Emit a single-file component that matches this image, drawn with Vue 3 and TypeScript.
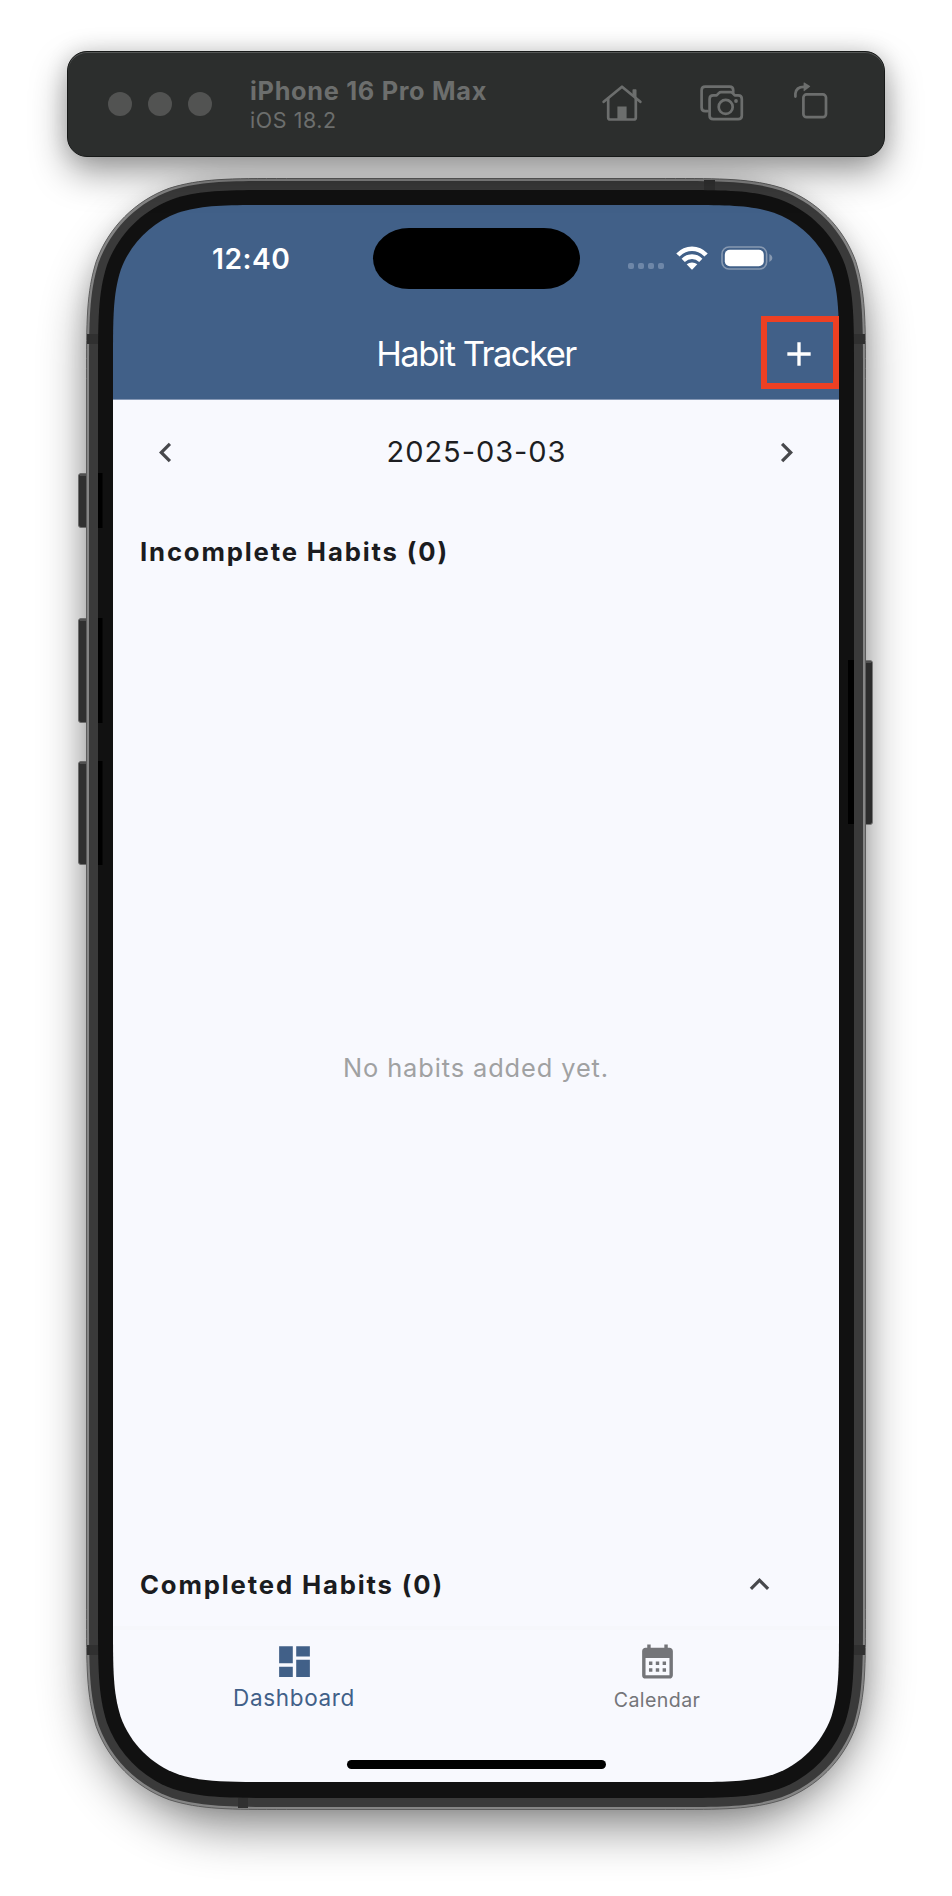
<script setup lang="ts">
import { ref } from 'vue'

/** Builds a rectangle whose corners ease in continuously, like the device hardware. */
function smoothRect(x: number, y: number, w: number, h: number, r: number): string {
  const steps = [
    [1.528665, 0], [1.088493, 0], [0.868407, 0], [0.631494, 0.074911],
    [0.372824, 0.169059], [0.169059, 0.372824], [0.074911, 0.631494],
    [0, 0.868407], [0, 1.088493], [0, 1.528665],
  ]
  const corner = (fx: boolean, fy: boolean, reverse: boolean): string => {
    const list = reverse ? [...steps].reverse() : steps
    const p = list.map(([a, b]) => {
      const px = fx ? x + w - a * r : x + a * r
      const py = fy ? y + h - b * r : y + b * r
      return `${px.toFixed(2)} ${py.toFixed(2)}`
    })
    return `${p[0]} C${p[1]} ${p[2]} ${p[3]} C${p[4]} ${p[5]} ${p[6]} C${p[7]} ${p[8]} ${p[9]}`
  }
  return (
    'M' + corner(true, false, false) +
    ' L' + corner(true, true, true) +
    ' L' + corner(false, true, false) +
    ' L' + corner(false, false, true) + 'Z'
  )
}

const outer = smoothRect(0.5, 0.5, 779, 1631, 131)
const rim = smoothRect(1.5, 1.5, 777, 1629, 130)
const band = smoothRect(3, 3, 774, 1626, 129)
const bezel = smoothRect(12, 12, 756, 1608, 119)
const screenClip = smoothRect(0, 0, 726, 1577, 103)

const date = ref('2025-03-03')
const incomplete = ref<string[]>([])
const completed = ref<string[]>([])
const leftButtons = [
  { y: 295, h: 55 },
  { y: 440, h: 105 },
  { y: 583, h: 104 },
]
const antennas = [
  { x: 618, y: 2, w: 11, h: 10 },
  { x: 152, y: 1620, w: 10, h: 10 },
  { x: 1, y: 156, w: 11, h: 10 },
  { x: 768, y: 156, w: 11, h: 10 },
  { x: 1, y: 1467, w: 11, h: 10 },
  { x: 768, y: 1467, w: 11, h: 10 },
]
</script>

<template>
  <main class="page">
    <header class="toolbar">
      <div class="lights"><i v-for="n in 3" :key="n"></i></div>
      <div class="device">
        <div class="device-name">iPhone 16 Pro Max</div>
        <div class="device-os">iOS 18.2</div>
      </div>
      <svg class="tool home" viewBox="0 0 40 36" width="40" height="36">
        <g fill="none" stroke="currentColor" stroke-width="2.7" stroke-linecap="round" stroke-linejoin="round">
          <path d="M1.7 16.8 20 1.7l18.3 15.1" />
          <path d="M6.2 13.5v19q0 2 2 2h23.6q2 0 2-2v-19" />
        </g>
        <path d="M15.4 21.5h9.2V34h-9.2zM30.5 5q0-.8.8-.8h2.4q.8 0 .8.8v9l-4-3.4z" fill="currentColor" />
      </svg>
      <svg class="tool camera" viewBox="0 0 44 36" width="44" height="36">
        <g fill="none" stroke="currentColor" stroke-width="2.7" stroke-linecap="round" stroke-linejoin="round">
          <path d="M7.5 26.2H5.2q-3.6 0-3.6-3.6V5.2q0-3.6 3.6-3.6h24.4q3.6 0 3.6 3.6v2.2" />
          <path d="M13.2 10.4h3.4l2.2-2.3q.9-.9 2.2-.9h9.4q1.3 0 2.2.9l2.2 2.3h3.4q3.6 0 3.6 3.6v16.8q0 3.4-3.6 3.4H13.2q-3.6 0-3.6-3.4V14q0-3.6 3.6-3.6z" />
          <circle cx="25.7" cy="21.9" r="7" />
        </g>
        <circle cx="36" cy="16" r="1.9" fill="currentColor" />
      </svg>
      <svg class="tool rotate" viewBox="0 0 34 38" width="34" height="38">
        <g fill="none" stroke="currentColor" stroke-width="2.7" stroke-linecap="round">
          <rect x="9.4" y="12.4" width="22.6" height="22.8" rx="3.2" />
          <path d="M1.4 14.6v-3Q2 4.8 10 4.8h1" />
        </g>
        <path d="M9.6 1v7.8q0 .8.8.3l5.6-4.4q.4-.4 0-.8L10.400.6q-.8-.5-.8.4z" fill="currentColor" />
      </svg>
    </header>

    <section class="phone">
      <div class="shade"></div>
      <svg class="body" width="800" height="1632" viewBox="-10 0 800 1632">
        <g v-for="b in leftButtons" :key="b.y">
          <rect x="-7.5" :y="b.y + 0.5" width="14" :height="b.h - 1" rx="2.5" fill="#303030" stroke="#6c6c6c" />
          <rect x="-6" :y="b.y + 1" width="9" height="2" fill="#505050" />
        </g>
        <rect x="773" y="482.5" width="13.5" height="164" rx="2.5" fill="#2c2c2c" stroke="#777" />
        <rect x="778" y="483" width="7" height="2" fill="#505050" />
        <path :d="outer" fill="#858585" stroke="#5c5c5c" stroke-width="1" />
        <path :d="rim" fill="#858585" />
        <path :d="band" fill="#3a3a3a" />
        <rect v-for="(a, i) in antennas" :key="i" :x="a.x" :y="a.y" :width="a.w" :height="a.h" fill="#303030" />
        <path :d="bezel" fill="#111" />
        <rect v-for="b in leftButtons" :key="'s' + b.y" x="12" :y="b.y" width="4.5" :height="b.h" />
        <rect x="762" y="482" width="6" height="164" />
      </svg>

      <div class="screen" :style="{ clipPath: `path('${screenClip}')` }">
        <div class="top">
          <div class="status">
            <span class="clock">12:40</span>
            <span class="island"></span>
            <span class="signal"><i v-for="n in 4" :key="n"></i></span>
            <svg class="wifi" viewBox="0 0 32 24" width="32" height="24">
              <g fill="none" stroke="#fff" stroke-width="4.6">
                <path d="M1.9 9Q8 2.7 16 2.7T30.1 9" />
                <path d="M7.2 14.3Q11 10.6 16 10.6t8.8 3.7" />
              </g>
              <path d="M10.7 18.3Q13 16.4 16 16.4t5.3 1.9L16.6 23.2q-.6.6-1.2 0z" fill="#fff" />
            </svg>
            <svg class="battery" viewBox="0 0 52 24" width="52" height="24">
              <rect x="1" y="1" width="44.6" height="22" rx="7" fill="none" stroke="#8799b1" stroke-width="1.6" />
              <rect x="3.8" y="3.7" width="39" height="16.5" rx="5" fill="#fff" />
              <path d="M48.4 8q3 1.3 3 4t-3 4z" fill="#8799b1" />
            </svg>
          </div>
          <div class="appbar">
            <h1>Habit Tracker</h1>
            <button class="add" aria-label="Add habit">
              <svg viewBox="0 0 24 24" width="40" height="40"><path d="M19 13h-6v6h-2v-6H5v-2h6V5h2v6h6v2z" fill="currentColor" /></svg>
            </button>
          </div>
        </div>

        <div class="daybar">
          <button aria-label="Previous day"><svg viewBox="0 0 24 24" width="39" height="39"><path d="M15.41 7.41 14 6l-6 6 6 6 1.41-1.41L10.83 12z" fill="currentColor" /></svg></button>
          <span class="date">{{ date }}</span>
          <button aria-label="Next day"><svg viewBox="0 0 24 24" width="39" height="39"><path d="M10 6 8.59 7.41 13.17 12l-4.58 4.59L10 18l6-6z" fill="currentColor" /></svg></button>
        </div>
        <h2 class="incomplete">Incomplete Habits ({{ incomplete.length }})</h2>
        <div class="empty"><span>No habits added yet.</span></div>
        <div class="done">
          <h2 class="complete">Completed Habits ({{ completed.length }})</h2>
          <button aria-label="Expand"><svg viewBox="0 0 24 24" width="39" height="39"><path d="m12 8-6 6 1.41 1.41L12 10.83l4.59 4.58L18 14z" fill="currentColor" /></svg></button>
        </div>
        <nav>
          <a class="tab active">
            <svg viewBox="0 0 24 24" width="41" height="41"><path d="M3 13h8V3H3v10zm0 8h8v-6H3v6zm10 0h8V11h-8v10zm0-18v6h8V3h-8z" fill="currentColor" /></svg>
            <span class="dash">Dashboard</span>
          </a>
          <a class="tab">
            <svg viewBox="0 0 24 24" width="41" height="41"><path d="M19 4h-1V2h-2v2H8V2H6v2H5c-1.11 0-2 .9-2 2v14a2 2 0 0 0 2 2h14c1.1 0 2-.9 2-2V6c0-1.1-.9-2-2-2zm0 16H5V10h14v10zM9 14H7v-2h2v2zm4 0h-2v-2h2v2zm4 0h-2v-2h2v2zm-8 4H7v-2h2v2zm4 0h-2v-2h2v2zm4 0h-2v-2h2v2z" fill="currentColor" /></svg>
            <span class="cal">Calendar</span>
          </a>
        </nav>
        <div class="indicator"></div>
      </div>
      <div class="highlight"></div>
    </section>
  </main>
</template>

<style>
body {
  margin: 0;
  background: #fff;
}
</style>

<style scoped>
* {
  box-sizing: border-box;
}
.page {
  width: 952px;
  height: 1896px;
  padding-top: 51px;
  overflow: hidden;
  background: #fff;
  font-family: Inter, "Liberation Sans", sans-serif;
}
svg {
  display: block;
  flex: none;
}
h1,
h2 {
  margin: 0;
  white-space: nowrap;
}
button {
  padding: 0;
  border: 0;
  background: none;
  color: #47484c;
}
.toolbar {
  position: relative;
  z-index: 1;
  display: flex;
  align-items: flex-start;
  width: 818px;
  height: 106px;
  margin-left: 67px;
  border: 1px solid #171918;
  border-radius: 20px;
  background: #2c2e2d;
  box-shadow: inset 0 1px 0 #555756, 0 16px 36px rgba(0, 0, 0, 0.38), 0 0 22px rgba(0, 0, 0, 0.14);
  color: #6c6e6d;
}
.lights {
  display: flex;
  gap: 16px;
  margin: 40px 0 0 40px;
}
.lights i {
  width: 24px;
  height: 24px;
  border-radius: 50%;
  background: #525352;
}
.device {
  width: 351.5px;
  margin: 23px 0 0 38px;
  white-space: nowrap;
}
.device-name {
  font-size: 25.3px;
  font-weight: 700;
  line-height: 32px;
  letter-spacing: 0.7px;
}
.device-os {
  font-size: 21.4px;
  line-height: 26px;
  letter-spacing: 0.6px;
}
.home {
  margin-top: 33px;
}
.camera {
  margin: 33px 0 0 58px;
}
.rotate {
  margin: 30px 0 0 50.5px;
}
.phone {
  position: relative;
  width: 780px;
  height: 1632px;
  margin: 21px 0 0 86px;
  padding: 27px;
}
.shade {
  position: absolute;
  inset: 2px;
  border-radius: 145px;
  box-shadow: 0 20px 48px rgba(0, 0, 0, 0.45), 0 0 24px rgba(0, 0, 0, 0.16);
}
.body {
  position: absolute;
  left: -10px;
  top: 0;
}
.screen {
  position: relative;
  display: flex;
  flex-direction: column;
  width: 726px;
  height: 1577px;
  background: linear-gradient(#416088 194px, #f8f9fe 194px);
}
.top {
  height: 195px;
  border-bottom: 1px solid #8698b5;
  color: #fff;
}
.status {
  display: flex;
  height: 103px;
  padding-top: 23px;
}
.clock {
  width: 161px;
  margin-left: 99px;
  font-size: 28.2px;
  font-weight: 600;
  line-height: 63px;
  letter-spacing: 0.5px;
}
.island {
  width: 207px;
  height: 61px;
  border-radius: 36px / 30.5px;
  background: #000;
}
.signal {
  display: flex;
  gap: 4px;
  margin: 35px 0 0 48px;
}
.signal i {
  width: 6px;
  height: 6px;
  border-radius: 2px;
  background: #6e87a8;
}
.wifi {
  margin: 18px 0 0 12px;
}
.battery {
  margin: 18px 0 0 12.5px;
}
.appbar {
  display: grid;
  grid-template-columns: 78px 1fr 78px;
  height: 91px;
}
.appbar h1 {
  grid-column: 2;
  font-size: 34.5px;
  font-weight: 400;
  line-height: 92px;
  text-align: center;
  letter-spacing: -1.5px;
}
.add {
  display: grid;
  place-items: center;
  height: 91px;
  padding-right: 2px;
  color: #fff;
}
.daybar {
  display: flex;
  align-items: center;
  justify-content: space-between;
  height: 105px;
  padding: 0 33px;
}
.date {
  margin: -2px 0 0 1px;
  font-size: 29px;
  letter-spacing: 0.95px;
  color: #1d1e22;
}
h2 {
  font-size: 25.7px;
  font-weight: 650;
  line-height: 36px;
  color: #1b1c20;
  letter-spacing: 1.85px;
}
.incomplete {
  margin: 29px 0 0 27px;
}
.empty {
  display: grid;
  flex: 1;
  place-items: center;
  padding-top: 23px;
  font-size: 25.4px;
  letter-spacing: 0.9px;
  color: #a0a1a2;
}
.done {
  display: flex;
  align-items: center;
  justify-content: space-between;
  height: 88px;
  padding: 1px 60px 0 27px;
  border-bottom: 4px solid #f6f7fb;
}
nav {
  display: flex;
  height: 130px;
}
.tab {
  display: flex;
  flex: 1;
  flex-direction: column;
  align-items: center;
  padding: 11px 1px 0 0;
  color: #747579;
}
.tab.active {
  color: #416088;
}
.dash {
  margin-top: 1px;
  font-size: 22.5px;
  line-height: 30px;
  letter-spacing: 0.65px;
}
.cal {
  margin-top: 3px;
  font-size: 19.6px;
  line-height: 30px;
  letter-spacing: 0.4px;
}
.indicator {
  width: 259px;
  height: 9px;
  margin: 0 auto 13px;
  border-radius: 5px;
  background: #000;
}
.highlight {
  position: absolute;
  left: 675px;
  top: 138px;
  width: 78px;
  height: 73px;
  border: 6px solid #ed4023;
}
</style>
